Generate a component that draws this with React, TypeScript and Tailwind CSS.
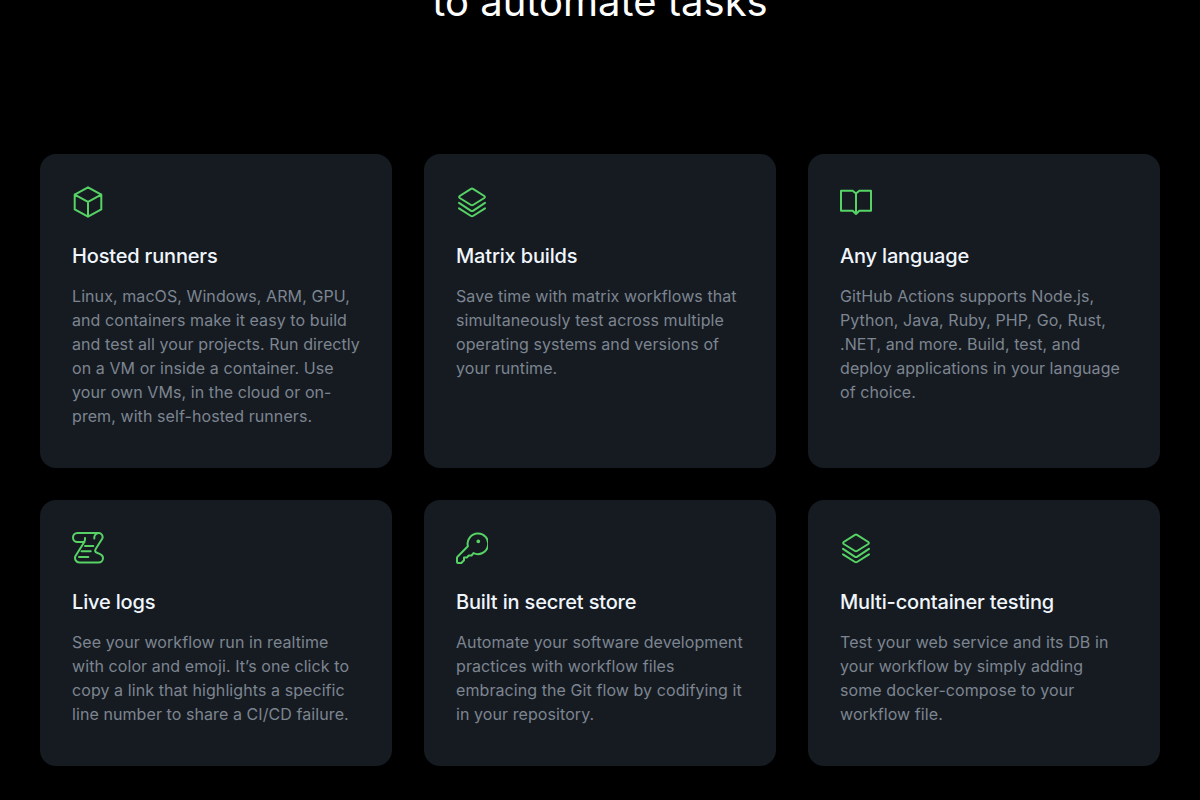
const ICON = 'w-8 h-8 fill-none stroke-[#56d364] stroke-2 [stroke-linejoin:round] [stroke-linecap:round]'

const Cube = () => (
  <svg viewBox="0 0 32 32" className={ICON}>
    <path d="M16 1.300 29.300 8.600v14.800L16 30.700 2.700 23.400V8.600ZM2.700 8.600 16 15.800 29.300 8.600M16 15.800v14.900" />
  </svg>
)

const Stack = () => (
  <svg viewBox="0 0 32 32" className={ICON}>
    <path d="M15 2.800a2 2 0 0 1 2 0l11.300 7.200a1.200 1.200 0 0 1 0 2L17 19a2 2 0 0 1-2 0L3.700 12a1.200 1.200 0 0 1 0-2Z" />
    <path d="M3 16.800 15 24.800a2 2 0 0 0 2 0l12-8M3 22.300 15 30a2 2 0 0 0 2 0l12-7.700" />
  </svg>
)

const Book = () => (
  <svg viewBox="0 0 32 32" className={ICON}>
    <path d="M1 4.700h11.700L16 7.400l3.300-2.700H31v20H19.300L16 28l-3.300-3.300H1ZM16 7.400V28" />
  </svg>
)

const Scroll = () => (
  <svg viewBox="0 0 32 32" className={ICON}>
    <path d="M12.500 10H5.500a4.500 4.500 0 0 1 0-9h21a4 4 0 0 1 3.800 5.500L24 16.500c-1.500 2.500-1 3.500 1.500 4.500 3 1 5.500 2 5.500 5a4.500 4.500 0 0 1-4.500 4.500H7.500A4.500 4.500 0 0 1 3.500 24L12 10.500c.8-1.500 1.200-3 1-4.500" />
    <path d="M22.300 6.500a5 5 0 0 1 4.200-5.500" />
    <path d="M13 14h8.300M9.500 19.300h9.200M7 25h9.300" />
  </svg>
)

const Key = () => (
  <svg viewBox="0 0 32 32" className={ICON}>
    <path d="M11.900 14.300 1.500 24.700a1.500 1.500 0 0 0-.5 1V30a1 1 0 0 0 1 1h3.300L8 28.300v-2.800h2.800l2-2h2.700l2-2.400A10.300 10.300 0 1 0 11.900 14.300Z" />
    <circle cx="22.300" cy="9.300" r=".9" />
  </svg>
)

const CARDS = [
  {
    icon: <Cube />,
    title: 'Hosted runners',
    body: 'Linux, macOS, Windows, ARM, GPU, and containers make it easy to build and test all your projects. Run directly on a VM or inside a container. Use your own VMs, in the cloud or on-prem, with self-hosted runners.',
  },
  {
    icon: <Stack />,
    title: 'Matrix builds',
    body: 'Save time with matrix workflows that simultaneously test across multiple operating systems and versions of your runtime.',
  },
  {
    icon: <Book />,
    title: 'Any language',
    body: 'GitHub Actions supports Node.js, Python, Java, Ruby, PHP, Go, Rust, .NET, and more. Build, test, and deploy applications in your language of choice.',
  },
  {
    icon: <Scroll />,
    title: 'Live logs',
    body: 'See your workflow run in realtime with color and emoji. It’s one click to copy a link that highlights a specific line number to share a CI/CD failure.',
  },
  {
    icon: <Key />,
    title: 'Built in secret store',
    body: 'Automate your software development practices with workflow files embracing the Git flow by codifying it in your repository.',
  },
  {
    icon: <Stack />,
    title: 'Multi-container testing',
    body: 'Test your web service and its DB in your workflow by simply adding some docker-compose to your workflow file.',
  },
]

export default function App() {
  return (
    <div className="h-[800px] overflow-hidden bg-black font-['Inter',sans-serif]">
      <h1 className="-mt-[22px] text-center text-[40px] leading-[48px] font-normal text-white">to automate tasks</h1>
      <div className="mt-[128px] grid grid-cols-3 gap-8 px-10">
        {CARDS.map((c) => (
          <div key={c.title} className="rounded-2xl bg-[#161b22] px-8 pt-8 pb-10">
            {c.icon}
            <h3 className="mt-6 mb-[14px] text-[20px] leading-7 font-medium tracking-[-0.17px] text-[#f0f6fc]">{c.title}</h3>
            <p className="text-base leading-6 tracking-[0.08px] text-[#7d8590]">{c.body}</p>
          </div>
        ))}
      </div>
    </div>
  )
}
